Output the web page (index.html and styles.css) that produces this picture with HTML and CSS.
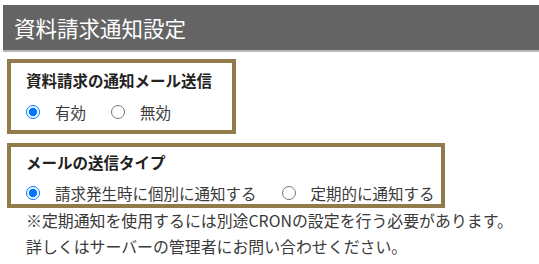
FILE: index.html
```html
<!DOCTYPE html>
<html lang="ja">
<head>
<meta charset="utf-8">
<link rel="stylesheet" href="styles.css">
</head>
<body>
<div class="page">
  <h2 class="page-title">資料請求通知設定</h2>
  <div class="field field--notify">
    <div class="field-label">資料請求の通知メール送信</div>
    <div class="options">
      <label class="option"><input type="radio" name="notify" checked><span>有効</span></label>
      <label class="option"><input type="radio" name="notify"><span>無効</span></label>
    </div>
  </div>
  <div class="field field--type">
    <div class="field-label">メールの送信タイプ</div>
    <div class="options">
      <label class="option"><input type="radio" name="type" checked><span>請求発生時に個別に通知する</span></label>
      <label class="option"><input type="radio" name="type"><span>定期的に通知する</span></label>
    </div>
  </div>
  <p class="note">※定期通知を使用するには別途CRONの設定を行う必要があります。<br>詳しくはサーバーの管理者にお問い合わせください。</p>
</div>
</body>
</html>
```

FILE: styles.css
```css
html, body {
  margin: 0;
  padding: 0;
  background: #ffffff;
}
body {
  font-family: "Noto Sans CJK JP", "Noto Sans", sans-serif;
  color: #333333;
}
.page {
  padding: 5px 0 0 3px;
}
.page-title {
  margin: 0;
  height: 45px;
  line-height: 45px;
  padding-left: 11px;
  background: #646464;
  color: #ffffff;
  font-size: 21.5px;
  font-weight: normal;
  border-bottom: 2px solid #b8b8b8;
}
.field {
  border: 4px solid #917b4b;
  margin-left: 4px;
  box-sizing: border-box;
  padding-left: 15px;
}
.field--notify {
  width: 229px;
  height: 75px;
  margin-top: 7px;
  padding-top: 5px;
}
.field--type {
  width: 438px;
  height: 65px;
  margin-top: 9px;
  padding-top: 3px;
}
.field-label {
  font-size: 15.5px;
  font-weight: bold;
  line-height: 24px;
  color: #222222;
}
.options {
  display: flex;
  align-items: center;
  gap: 25px;
}
.field--notify .options {
  margin-top: 8px;
  height: 24px;
}
.field--type .options {
  margin-top: 8px;
  height: 22px;
}
.option {
  display: flex;
  align-items: center;
  gap: 15px;
  font-size: 15.5px;
  line-height: 22px;
  color: #3a3a3a;
}
.option input {
  margin: 0;
  width: 14px;
  height: 14px;
}
.note {
  margin: 0;
  padding-left: 23px;
  font-size: 15.9px;
  line-height: 26px;
  color: #3a3a3a;
}
```
